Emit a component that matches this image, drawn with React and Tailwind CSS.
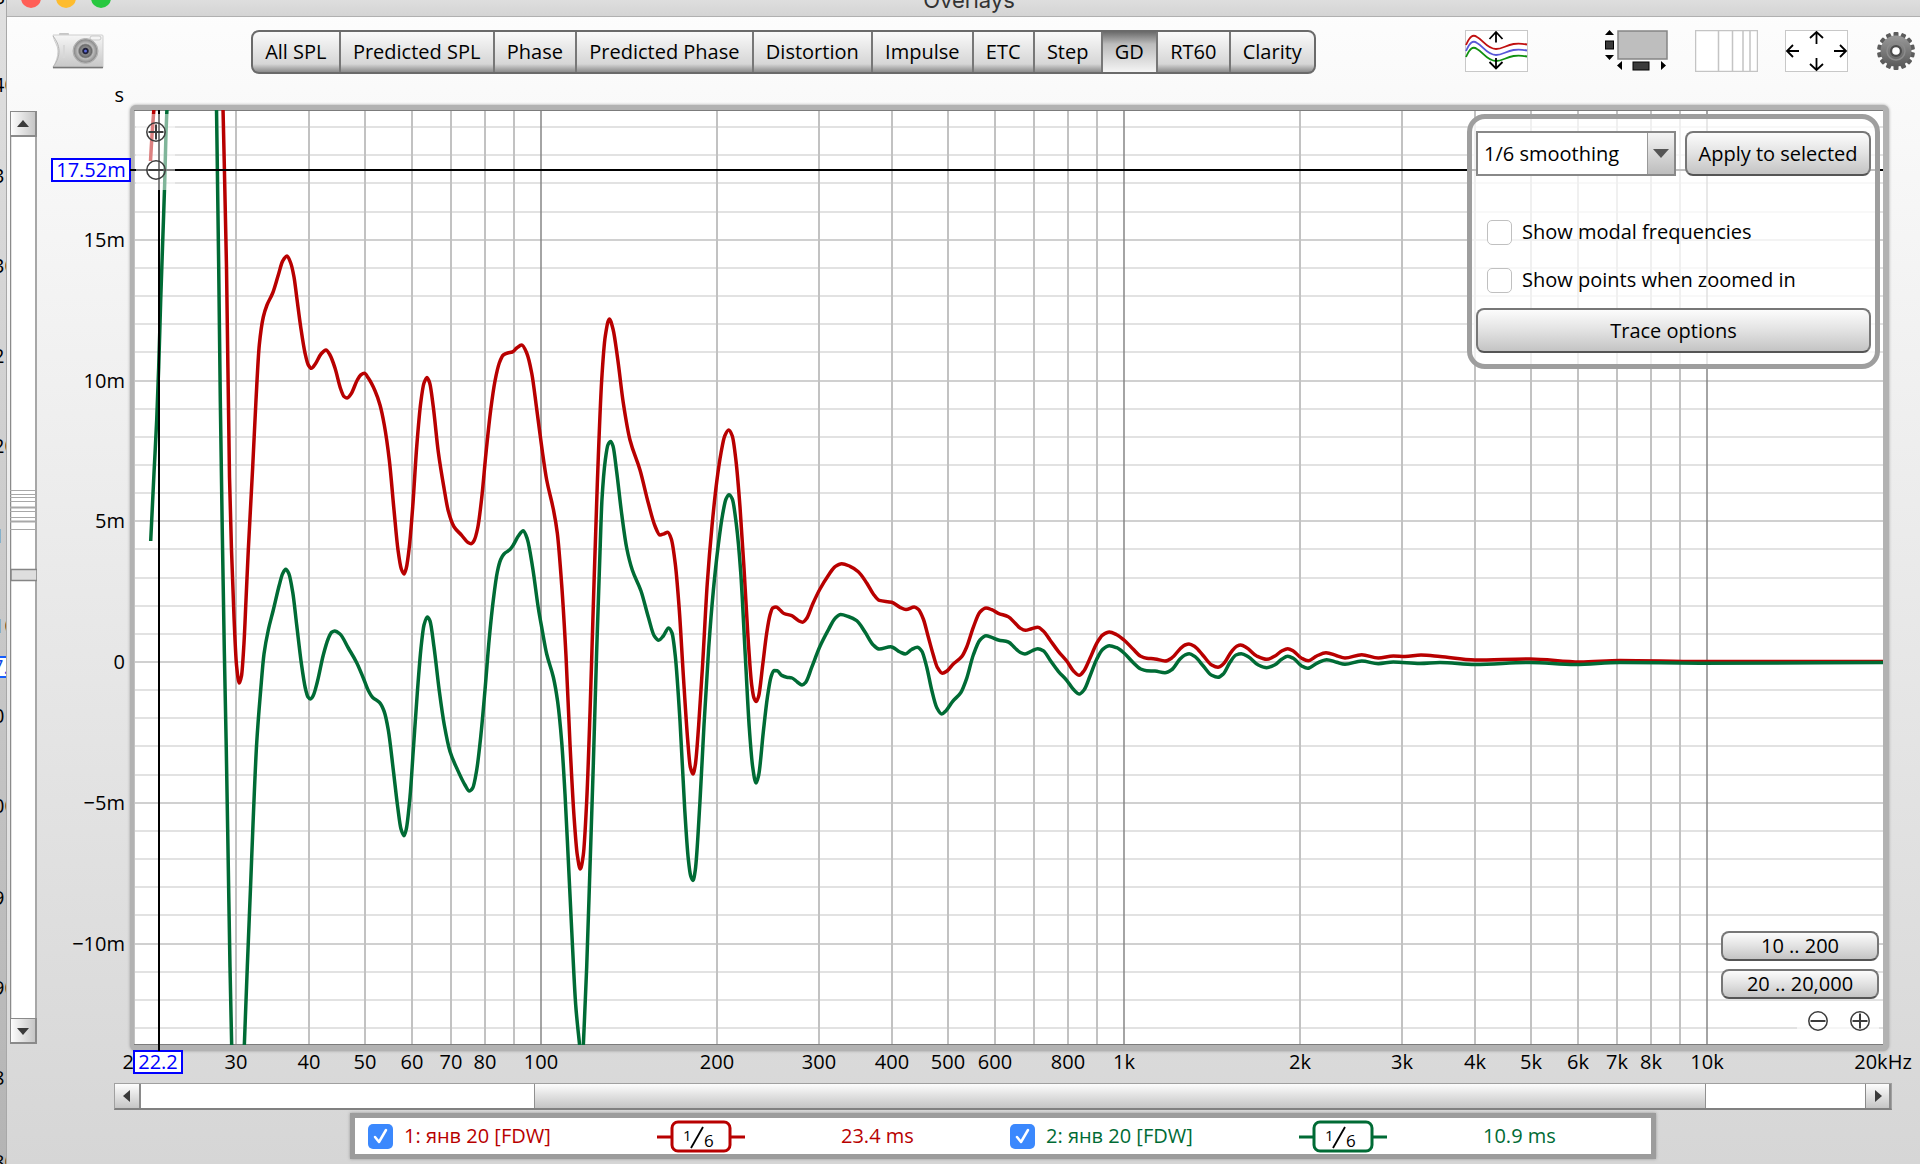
import { useState } from 'react';

const TABS = [
  'All SPL', 'Predicted SPL', 'Phase', 'Predicted Phase', 'Distortion', 'Impulse',
  'ETC', 'Step', 'GD', 'RT60', 'Clarity',
];

// Canvas of the plot in its own units
const BOX = { x: 134, y: 110, w: 1749, h: 935 };
const freqX = (f) => Math.round(541 + 583 * Math.log10(f / 100));
const delayY = (ms) => Math.round(662 - 28.15 * ms);
const left = (x) => `${((x - BOX.x) / BOX.w) * 100}%`;
const top = (y) => `${((y - BOX.y) / BOX.h) * 100}%`;

const FREQS = [10, 100, 1000].flatMap((d) => [2, 3, 4, 5, 6, 7, 8, 9, 10].map((n) => n * d));
const DELAYS = Array.from({ length: 33 }, (_, i) => i - 13);

const X_LABELS = [
  [20, '20'], [30, '30'], [40, '40'], [50, '50'], [60, '60'], [70, '70'], [80, '80'],
  [100, '100'], [200, '200'], [300, '300'], [400, '400'], [500, '500'], [600, '600'],
  [800, '800'], [1000, '1k'], [2000, '2k'], [3000, '3k'], [4000, '4k'], [5000, '5k'],
  [6000, '6k'], [7000, '7k'], [8000, '8k'], [10000, '10k'], [20000, '20kHz'],
];
const Y_LABELS = [[15, '15m'], [10, '10m'], [5, '5m'], [0, '0'], [-5, '−5m'], [-10, '−10m']];

const RED = [
  [[150.5, 161], [152, 135], [154, 108]],
  [
    [223, 108], [226.5, 267], [229.5, 477], [231.5, 550], [234, 617], [236.5, 665], [239.3, 683], [241.5, 676],
    [244, 643], [246, 600], [248.3, 550], [252.7, 467], [256, 400], [259.3, 345], [263.3, 317], [267, 305],
    [272.7, 293], [278.3, 275], [282.7, 261], [287, 256], [290.7, 263], [294, 277], [296.7, 297], [300.7, 327],
    [305, 353], [308.3, 365], [311.3, 368.3], [315.3, 364], [321, 354], [326, 350], [330, 355], [335, 368],
    [340.7, 389], [344, 396.5], [347, 398], [351, 394], [357.3, 380], [360.7, 375], [364.3, 373.3], [368.3, 378],
    [375, 390.7], [380, 405], [384.3, 425], [389.3, 460], [394, 510], [398, 550], [401.3, 569], [404, 574],
    [406.3, 568], [409.3, 547], [412.7, 507], [416.7, 447], [420.7, 403], [424, 383], [427, 377.5], [429.7, 383],
    [433.3, 407], [438.3, 452], [444, 488], [448.3, 511], [454, 526.7], [461.7, 535.3], [468, 542.5], [471, 543.7],
    [474, 540.7], [477.7, 528], [481.7, 498], [486, 453], [490.7, 410], [495, 381], [499.3, 363], [503.3, 355],
    [507.7, 353], [512.3, 352], [516.7, 348], [521.7, 345], [526.7, 353], [531.7, 373], [536.7, 409], [542, 449],
    [546.7, 480], [553.3, 509], [557.3, 533], [561.7, 585], [566, 656], [570, 744], [574, 816], [577.3, 855],
    [580.3, 869], [583.3, 855], [586.7, 801], [590, 713], [593.3, 606], [597.3, 484], [601.7, 380], [605.3, 336],
    [609.3, 319], [613, 329], [617.7, 359], [623.3, 403], [630, 440], [640, 470], [648.3, 503], [655, 526],
    [660, 535], [664, 533.8], [667.7, 532.3], [671.3, 539], [675.3, 564], [679.3, 610], [683.3, 675], [687.7, 740],
    [690.3, 767], [693, 774], [695.3, 765], [698.7, 725], [702.7, 663], [707.3, 583], [712, 526], [716.7, 482],
    [721, 453], [724.7, 436], [728.7, 430], [732.3, 436], [736, 461], [740, 507], [744, 568], [748, 637],
    [751.7, 685], [754, 698], [756.3, 701.5], [758.7, 696], [762.7, 665], [766.7, 633], [770, 615], [772.7, 608],
    [776, 606.9], [780, 610], [784, 613.5], [791.7, 615.7], [798.3, 620.5], [802.7, 622.2], [806.7, 618.4],
    [812.7, 604], [820, 589], [828.3, 575.5], [835, 566.7], [841.7, 563.7], [850, 566.3], [858.3, 571.7],
    [866.7, 583], [873.3, 594], [879.3, 600.4], [891.7, 602.3], [900, 607.3], [906, 609.6], [914.3, 607],
    [918.3, 609.3], [923.3, 619], [928.3, 637], [933.3, 655], [937.3, 667.3], [942.3, 673.3], [947.3, 670.7],
    [953.3, 664], [961.7, 656.7], [966.7, 647], [973.3, 627.3], [980, 612], [986, 608], [991.7, 609.7],
    [998.3, 613.3], [1008.3, 616.7], [1015, 623], [1020, 628], [1025.3, 630.3], [1031.7, 628.7], [1037.7, 627.3],
    [1043.3, 631], [1050, 640], [1058.3, 651.3], [1066.7, 661], [1073.3, 670.7], [1079.3, 675.3], [1084, 670.7],
    [1090, 658.3], [1096.7, 643.3], [1102.7, 635], [1109.3, 632], [1116.7, 634.7], [1124, 640], [1133.3, 649.3],
    [1140.7, 656.3], [1146.7, 658.3], [1155, 658.9], [1165, 661], [1171.7, 658], [1180, 649], [1185, 645],
    [1189, 644], [1195, 646.7], [1203.3, 655.7], [1211.7, 665], [1218, 667.3], [1223.3, 664], [1231.7, 651.3],
    [1236.7, 646.3], [1240.7, 645], [1246.7, 647.7], [1256.7, 656], [1266.7, 659.3], [1275, 656], [1281.7, 651],
    [1287.7, 648.7], [1293.3, 651], [1301.7, 658.3], [1308.3, 660.7], [1316.7, 656], [1326, 652.7], [1336.7, 655.7],
    [1345, 658], [1361.7, 654.7], [1378.3, 658], [1393.3, 656], [1405, 656.5], [1421, 655], [1440, 656.5],
    [1475, 660], [1530, 659], [1580, 662], [1620, 660.5], [1700, 661.5], [1883, 661.5],
  ],
];

const GREEN = [
  [
    [150.7, 541], [154, 473], [156.7, 420], [158.7, 367], [160.7, 300], [163, 233], [164.7, 183], [166, 133], [167, 108],
  ],
  [
    [216.5, 108], [218.7, 267], [220.3, 400], [222.3, 533], [224.3, 650], [226.3, 750], [228.3, 867], [230, 967],
    [231.7, 1046],
  ],
  [
    [244.3, 1046], [247.3, 967], [250.7, 883], [253.3, 817], [256.7, 743], [260.7, 690], [264, 654], [268.3, 630],
    [273.3, 610], [279.3, 585], [282.7, 573.5], [285.7, 569.3], [288.7, 573.3], [292.7, 592], [296.7, 625],
    [301.3, 663], [305.3, 688], [308, 697], [310.3, 699], [313, 696], [317.3, 682], [323.3, 655], [328.3, 638.5],
    [331.7, 632.3], [334.7, 631], [340, 634], [348.3, 648], [356.7, 662.7], [363.3, 678], [368.3, 690.5],
    [372.7, 697.5], [379.3, 702.3], [384, 711], [388.3, 730], [393.3, 770], [397.7, 807], [401, 829], [404, 835.7],
    [406.3, 829], [410, 797], [413.3, 750], [417.3, 693], [421, 648], [424, 625], [427.3, 617], [430, 621],
    [434, 647], [439.3, 691], [444.3, 725], [450, 751.5], [456.7, 768], [465, 785], [469.3, 791], [472.7, 788],
    [476.7, 770], [480.7, 737], [485, 690], [489.3, 638], [493.3, 600], [497.3, 572], [500.7, 559.5], [504, 554],
    [510, 549.5], [513.3, 545], [518.3, 536], [523.3, 530.7], [527.3, 539], [532.7, 568], [538.3, 608], [542, 629],
    [546.7, 654], [553.3, 677], [557.7, 702], [561.7, 742], [565, 794], [568.3, 860], [571.7, 930], [575.7, 1005],
    [579.7, 1046],
  ],
  [
    [583.3, 1046], [586.7, 967], [590, 867], [593.3, 765], [596.7, 650], [600, 552], [602, 499], [605.3, 460],
    [608, 444.7], [610.7, 441.5], [613, 446], [616.7, 472], [621.7, 514], [626.7, 548], [632.3, 570], [641, 591],
    [648.3, 617], [654.3, 636], [658.7, 640.2], [663.3, 636], [668.7, 628], [672, 633], [675.3, 656], [680, 721],
    [684.7, 809], [688.3, 859], [690.7, 876], [693, 880.5], [695.3, 870], [700, 801], [704, 725], [708.7, 648],
    [713.3, 591], [718.3, 545], [722.7, 514], [726, 499], [729, 494.8], [732.3, 499], [736.3, 524], [740.7, 572],
    [745.3, 656], [749.3, 728], [752.7, 767], [756, 783], [758.7, 775], [763.3, 732], [767.3, 698], [771, 677],
    [774, 670.5], [777.3, 670.8], [781.7, 675.4], [786.7, 677.3], [791.7, 677.9], [797.3, 682], [802, 685],
    [805.7, 682.3], [811.7, 667.4], [820, 646.3], [828.3, 630], [835, 618.4], [840.7, 614.6], [848.3, 616.5],
    [856.7, 620.7], [865, 632], [873.3, 645], [879.3, 649], [890.7, 646.7], [900, 652], [905.3, 654], [911.7, 649.5],
    [917.3, 647.3], [921.7, 651], [926.7, 667], [931.7, 690], [936.7, 707.5], [941.7, 714], [946, 710.7],
    [952.7, 701.3], [960.7, 692.7], [966.7, 678.3], [973.3, 655], [980, 640], [986, 635.7], [991.7, 637.3],
    [998.3, 640], [1008.3, 642], [1015, 648], [1020, 652.3], [1025, 654], [1031.7, 651], [1037.7, 648.7],
    [1043.3, 650.7], [1050, 660], [1058.3, 671.3], [1066.7, 680.3], [1073.3, 689.3], [1079.3, 694], [1084, 690],
    [1090, 676], [1096.7, 659.3], [1102.7, 649.3], [1109.3, 645.7], [1116.7, 647.7], [1124, 653], [1133.3, 662.7],
    [1140.7, 669], [1146.7, 670.7], [1155, 671.1], [1165, 672.7], [1171.7, 669.7], [1180, 659], [1185, 655],
    [1189.3, 653.7], [1195, 656.7], [1203.3, 666], [1211.7, 675.3], [1218, 677.3], [1223.3, 674], [1230, 662.3],
    [1236, 655], [1241.3, 653.7], [1248.3, 656.7], [1258.3, 665], [1266.7, 667.7], [1275, 664.7], [1281.7, 659.3],
    [1287.7, 656.3], [1293.3, 658.3], [1301.7, 666], [1307.7, 668.3], [1316.7, 663.3], [1326.7, 659.7],
    [1336.7, 662.3], [1345, 664.3], [1361.7, 661], [1378.3, 663.7], [1393.3, 662], [1420, 663.5], [1440, 662.5],
    [1475, 664.5], [1530, 662.5], [1575, 664.5], [1620, 662.5], [1700, 663.2], [1883, 662.5],
  ],
];

// Monotone cubic through the points, so peaks don't overshoot
function curve(pts) {
  const n = pts.length;
  const d = [];
  for (let i = 0; i < n - 1; i++) d.push((pts[i + 1][1] - pts[i][1]) / (pts[i + 1][0] - pts[i][0]));
  const m = pts.map((_, i) => {
    if (i === 0) return d[0];
    if (i === n - 1) return d[n - 2];
    if (d[i - 1] * d[i] <= 0) return 0;
    return (2 * d[i - 1] * d[i]) / (d[i - 1] + d[i]);
  });
  let out = `M${pts[0][0]} ${pts[0][1]}`;
  for (let i = 0; i < n - 1; i++) {
    const [x0, y0] = pts[i];
    const [x1, y1] = pts[i + 1];
    const h = (x1 - x0) / 3;
    out += `C${x0 + h} ${y0 + m[i] * h} ${x1 - h} ${y1 - m[i + 1] * h} ${x1} ${y1}`;
  }
  return out;
}

const BUTTON =
  'border-2 border-[#777] border-b-[#555] rounded-lg bg-linear-to-b from-[#fcfcfc] via-[#e2e2e2] to-[#c4c4c4]';

function Trace({ segments, color }) {
  return segments.map((pts, i) => (
    <path key={i} d={curve(pts)} fill="none" stroke={color} strokeWidth="3.5" strokeLinejoin="round" />
  ));
}

function ZoomButton({ label, plus }) {
  return (
    <button aria-label={label} className="block size-5">
      <svg viewBox="0 0 20 20" className="size-5" fill="none" stroke="#3c3c3c">
        <circle cx="10" cy="10" r="9.2" strokeWidth="1.5" />
        <path d={plus ? 'M2.500 10h15M10 2.500v15' : 'M2.500 10h15'} strokeWidth="2" />
      </svg>
    </button>
  );
}

function Camera() {
  return (
    <svg viewBox="0 0 52 36" className="w-[52px] h-9">
      <defs>
        <linearGradient id="cam" x1="0" y1="0" x2="0" y2="1">
          <stop offset="0" stopColor="#f6f6f6" />
          <stop offset="1" stopColor="#c6c6c6" />
        </linearGradient>
        <radialGradient id="lens">
          <stop offset="0" stopColor="#0a0a1c" />
          <stop offset="0.22" stopColor="#23233c" />
          <stop offset="0.3" stopColor="#8c8c8c" />
          <stop offset="0.5" stopColor="#6b6b6b" />
          <stop offset="0.62" stopColor="#bdbdbd" />
          <stop offset="0.9" stopColor="#8e8e8e" />
          <stop offset="1" stopColor="#c8c8c8" />
        </radialGradient>
      </defs>
      <rect x="7" y="0" width="10" height="4" rx="1" fill="#c6c6c6" />
      <path d="M1 2H50a1 1 0 0 1 1 1V34a1 1 0 0 1-1 1H1C4 29 6 24 6 18C6 12 2 9 1 2Z" fill="url(#cam)" stroke="#cfcfcf" />
      <path d="M1 3C8 12 10 22 1 34" fill="none" stroke="#b4b4b4" />
      <path d="M1 34.5H51" stroke="#777" strokeWidth="1.5" />
      <rect x="38" y="3" width="11" height="4" rx="2" fill="#f4f4f4" stroke="#c9c9c9" />
      <path d="M12 12v13" stroke="#d8d8d8" strokeWidth="2" />
      <circle cx="33.5" cy="18" r="12.5" fill="url(#lens)" stroke="#b0b0b0" />
      <circle cx="33.5" cy="18" r="1.5" fill="#5b68d8" />
    </svg>
  );
}

function CurvesIcon() {
  const wave = 'C5 6 8 4 12 7C18 10 22 19 31 19C40 19 44 11 62 14.500';
  return (
    <svg viewBox="0 0 63 42" className="w-[63px] h-[42px]" fill="none">
      <rect x="0.5" y="0.5" width="62" height="41" fill="#fff" stroke="#c8c8c8" />
      <path d={`M1 15${wave}`} stroke="#c01010" strokeWidth="1.8" />
      <path d={`M1 15${wave}`} stroke="#5858d8" strokeWidth="1.8" transform="translate(0 6)" />
      <path d={`M1 15${wave}`} stroke="#109010" strokeWidth="1.8" transform="translate(0 12)" />
      <path d="M31 12.500V2M24.500 9L31 2L37.500 9M31 28V38.500M24.500 32L31 38.500L37.500 32" stroke="#000" strokeWidth="1.8" />
    </svg>
  );
}

function ScrollbarsIcon() {
  return (
    <svg viewBox="0 0 63 42" className="w-[63px] h-[42px]">
      <rect x="13" y="1" width="49" height="28" fill="#bebebe" stroke="#858585" strokeWidth="1.5" />
      <path d="M0 5L4.500 0L9 5ZM0 25L4.500 30L9 25ZM17 31V40L12 35.500ZM56 31V40L61 35.500Z" fill="#000" />
      <rect x="0.500" y="11" width="8" height="8" fill="#3a3a3a" stroke="#000" />
      <rect x="28" y="32" width="16" height="8" fill="#3a3a3a" stroke="#000" />
    </svg>
  );
}

function GridIcon() {
  return (
    <svg viewBox="0 0 63 42" className="w-[63px] h-[42px]" fill="none" stroke="#c4c4c4">
      <rect x="0.5" y="0.5" width="62" height="41" fill="#fff" strokeWidth="1.500" />
      <path d="M23.500 0V42M37.500 0V42M48 0V42M55 0V42" strokeWidth="1.500" />
    </svg>
  );
}

function ArrowsIcon() {
  return (
    <svg viewBox="0 0 63 42" className="w-[63px] h-[42px]" fill="none">
      <rect x="0.5" y="0.5" width="62" height="41" fill="#fff" stroke="#c8c8c8" />
      <path
        d="M31.500 14V2M25 8L31.500 2L38 8M31.500 28V40M25 34L31.500 40L38 34M14 21H2M8 15L2 21L8 27M49 21H61M55 15L61 21L55 27"
        stroke="#000"
        strokeWidth="1.8"
      />
    </svg>
  );
}

function GearIcon() {
  return (
    <svg viewBox="-20 -20 40 40" className="size-10">
      <defs>
        <linearGradient id="gear" x1="0" y1="0" x2="0" y2="1">
          <stop offset="0" stopColor="#9a9a9a" />
          <stop offset="1" stopColor="#5a5a5a" />
        </linearGradient>
      </defs>
      {Array.from({ length: 14 }, (_, i) => (
        <rect key={i} x="-2.500" y="-19" width="5" height="8" rx="1" fill="#5c5c5c" transform={`rotate(${(i * 360) / 14})`} />
      ))}
      <circle r="15.500" fill="url(#gear)" />
      <circle r="9" fill="none" stroke="#8b8b8b" strokeWidth="1.5" />
      <circle r="6" fill="#4c4c4c" />
      <circle r="3.800" fill="#fff" />
    </svg>
  );
}

function Arrow({ d }) {
  return (
    <svg viewBox="0 0 12 12" className="size-3" fill="#3a3a3a">
      <path d={d} />
    </svg>
  );
}

function SmoothingBadge({ color }) {
  return (
    <svg viewBox="0 -1 88 34" className="w-[88px] h-[34px]" fill="none">
      <path d="M0 17H15M73 17H88" stroke={color} strokeWidth="3" />
      <rect x="15" y="2" width="58" height="29" rx="6" fill="#fff" stroke={color} strokeWidth="3" />
      <path d="M34 28L46 7" stroke="#000" strokeWidth="1.800" />
      <text x="26" y="21" fontSize="15" fill="#000">1</text>
      <text x="47" y="27" fontSize="17" fill="#000">6</text>
    </svg>
  );
}

function LegendItem({ id, name, value, color, tone }) {
  return (
    <div className={`grid w-[642px] shrink-0 grid-cols-[25px_264px_88px_1fr] items-center ${tone}`}>
      <input id={id} type="checkbox" defaultChecked className="peer col-start-1 row-start-1 size-[25px] appearance-none rounded-[5px] bg-[#3b88fd]" />
      <svg viewBox="0 0 25 25" className="pointer-events-none col-start-1 row-start-1 size-[25px]" fill="none">
        <path d="M7 13L11 18L18 6" stroke="#fff" strokeWidth="2.500" strokeLinecap="round" strokeLinejoin="round" />
      </svg>
      <label htmlFor={id} className="pl-[11px]">{name}</label>
      <SmoothingBadge color={color} />
      <span className="pl-24">{value}</span>
    </div>
  );
}

// Axis of the window behind, peeking out on the left edge
const BEHIND = [
  ['P', 'top-[-10px]'], ['40', 'top-[72px]'], ['3', 'top-[163px]'], ['30', 'top-[253px]'], ['2', 'top-[343px]'],
  ['20', 'top-[433px]'], ['1', 'top-[523px]'], ['10', 'top-[613px]'], ['0', 'top-[703px]'], ['00', 'top-[793px]'],
  ['9', 'top-[885px]'], ['90', 'top-[975px]'], ['8', 'top-[1065px]'], ['80', 'top-[1149px]'],
];

function WindowBehind() {
  return (
    <div className="relative w-[6px] shrink-0 overflow-hidden bg-linear-to-b from-[#e0e0e0] to-[#b4b4b4]">
      {BEHIND.map(([t, pos], i) => (
        <span key={i} className={`absolute -left-[7px] leading-[26px] ${pos}`}>{t}</span>
      ))}
      <span className="absolute -left-[14px] top-[656px] w-8 border-2 border-blue-600 bg-white pl-1 leading-[18px] text-blue-700">7.</span>
    </div>
  );
}

function VerticalScroll() {
  const button = 'flex h-[26px] shrink-0 items-center justify-center border border-r-2 border-b-2 border-[#8a8a8a] bg-linear-to-r from-[#fdfdfd] to-[#c6c6c6]';
  return (
    <div className="mt-[6px] mb-[7px] ml-[3px] flex w-[27px] flex-col">
      <button aria-label="Scroll up" className={button}><Arrow d="M0 9L6 2L12 9Z" /></button>
      <svg viewBox="0 0 27 880" preserveAspectRatio="none" className="min-h-0 w-full flex-1">
        <rect width="27" height="880" fill="#fff" />
        <path d="M0.500 0V880M26 0V880" stroke="#8a8a8a" strokeWidth="1.500" />
        <path d="M0 353H27M0 357H27M0 360H27M0 364H27M0 374H27M0 380H27M0 392H27" stroke="#a8a8a8" />
        <path d="M0 370H27M0 384H27" stroke="#a8a8a8" strokeWidth="2" />
        <rect x="1" y="432" width="26" height="11" fill="#dedede" stroke="#858585" strokeWidth="1.500" />
      </svg>
      <button aria-label="Scroll down" className={button}><Arrow d="M0 3L6 10L12 3Z" /></button>
    </div>
  );
}

function HorizontalScroll() {
  const button = 'flex w-[26px] items-center justify-center border-r-2 border-[#8a8a8a] bg-linear-to-b from-[#fdfdfd] to-[#c6c6c6]';
  return (
    <div className="mt-2 mr-7 ml-[107px] flex h-[27px] shrink-0 border border-[#a0a0a0] border-b-2 border-b-[#808080] bg-white">
      <button aria-label="Scroll left" className={button}><Arrow d="M9 0L2 6L9 12Z" /></button>
      <div className="flex flex-1">
        <div className="w-[22.8%]" />
        <div className="w-[68%] border-x border-[#909090] bg-linear-to-b from-[#fdfdfd] to-[#c4c4c4]" />
      </div>
      <button aria-label="Scroll right" className={`${button} border-l`}><Arrow d="M3 0L10 6L3 12Z" /></button>
    </div>
  );
}

function GraphSettings() {
  return (
    <div className="absolute top-1 right-[3px] w-[413px] rounded-[18px] border-[5px] border-[#9e9e9e] bg-white/75 px-1 pt-3 pb-[11px]">
      <div className="flex h-[45px] gap-[9px]">
        <div className="relative w-[200px] shrink-0">
          <select aria-label="Smoothing" className="h-full w-full appearance-none border-2 border-[#888] bg-white pl-1.5">
            <option>1/6 smoothing</option>
          </select>
          <span className="pointer-events-none absolute inset-y-0.5 right-0.5 flex w-[27px] items-center justify-center border-l border-[#999] bg-linear-to-b from-[#f4f4f4] to-[#bdbdbd]">
            <svg viewBox="0 0 16 9" className="w-4" fill="#555"><path d="M0 0H16L8 9Z" /></svg>
          </span>
        </div>
        <button className={`flex-1 ${BUTTON}`}>Apply to selected</button>
      </div>
      <div className="mt-8 mb-1">
        {['Show modal frequencies', 'Show points when zoomed in'].map((text) => (
          <label key={text} className="flex h-12 items-center gap-2.5 pl-[11px]">
            <input type="checkbox" className="size-[25px] appearance-none rounded-[5px] border border-[#c0c0c0] bg-white checked:bg-[#3b88fd]" />
            {text}
          </label>
        ))}
      </div>
      <button className={`h-[45px] w-full ${BUTTON}`}>Trace options</button>
    </div>
  );
}

function Plot() {
  return (
    <div className="flex-1 rounded-md bg-[#b2b2b2] pt-[5px] pr-[6px] pb-[6px] pl-1 shadow-[0_0_3px_#999]">
      <div className="relative h-full bg-white">
        <svg viewBox={`${BOX.x} ${BOX.y} ${BOX.w} ${BOX.h}`} preserveAspectRatio="none" className="block h-full w-full">
          {DELAYS.map((v) => (
            <path key={v} d={`M134 ${delayY(v)}H1883`} stroke={v % 5 ? '#e2e2e2' : '#c0c0c0'} strokeWidth={v % 5 ? 2 : 1.5} />
          ))}
          {FREQS.map((f) => (
            <path key={f} d={`M${freqX(f)} 110V1045`} stroke={Math.log10(f) % 1 ? '#c2c2c2' : '#868686'} strokeWidth={Math.log10(f) % 1 ? 2 : 1.5} />
          ))}
          <path d="M134 110.500H1883M134 1044.500H1883" stroke="#7c7c7c" />
          <Trace segments={RED} color="#b80000" />
          <Trace segments={GREEN} color="#006b35" />
          <path d="M134 170H1883M159 110V1045" stroke="#000" strokeWidth="2" />
        </svg>

        <div className="absolute top-1 left-0.5 flex h-[76px] w-[39px] flex-col items-center gap-[18px] bg-white/50 pt-2">
          <ZoomButton label="Zoom in vertically" plus />
          <ZoomButton label="Zoom out vertically" />
        </div>

        <GraphSettings />

        <div className="absolute right-1 bottom-[10px] flex w-[158px] flex-col gap-2">
          <button className={`h-[30px] leading-none ${BUTTON}`}>10 .. 200</button>
          <button className={`h-[30px] leading-none ${BUTTON}`}>20 .. 20,000</button>
          <div className="ml-auto flex h-7 w-[82px] items-center gap-[22px] bg-white/70 pl-[11px]">
            <ZoomButton label="Zoom out horizontally" />
            <ZoomButton label="Zoom in horizontally" plus />
          </div>
        </div>

        {/* axis labels hang outside the plot */}
        {Y_LABELS.map(([v, text]) => (
          <span key={text} className="absolute right-full mr-[9px] -translate-y-1/2 leading-6" style={{ top: top(delayY(v)) }}>
            {text}
          </span>
        ))}
        {X_LABELS.map(([f, text]) => (
          <span key={text} className="absolute top-full mt-[5px] -translate-x-1/2 leading-6" style={{ left: left(freqX(f)) }}>
            {text}
          </span>
        ))}
        <span className="absolute right-full bottom-full mr-[10px] mb-[3px] leading-6">s</span>
        <span
          className="absolute right-full mr-[3px] w-20 -translate-y-1/2 border-2 border-[#0000ff] bg-white text-center leading-5 text-[#0000ff]"
          style={{ top: top(170) }}
        >
          17.52m
        </span>
        <span
          className="absolute top-full mt-[5px] w-[50px] -translate-x-1/2 border-2 border-[#0000ff] bg-white text-center leading-5 text-[#0000ff]"
          style={{ left: left(158) }}
        >
          22.2
        </span>
        <span className="absolute top-full h-[6px] w-0.5 bg-black" style={{ left: left(158) }} />
        <span className="absolute right-full h-0.5 w-1 bg-black" style={{ top: top(169) }} />
      </div>
    </div>
  );
}

export default function App() {
  const [tab, setTab] = useState('GD');

  return (
    <div className="flex h-screen overflow-hidden font-['Open_Sans','Noto_Sans',sans-serif] text-[20px] text-black">
      <WindowBehind />
      <div className="flex min-w-0 flex-1 flex-col border-l border-[#a8a8a8] bg-linear-to-b from-[#fdfdfd] to-[#d6d6d6]">
        <header className="relative flex h-[17px] shrink-0 items-end border-b border-[#b0b0b0] bg-linear-to-b from-[#dedede] to-[#d4d4d4] pl-[14px]">
          <div className="flex gap-[15px] pb-2">
            <span className="size-5 rounded-full bg-[#ff5f57]" />
            <span className="size-5 rounded-full bg-[#febc2e]" />
            <span className="size-5 rounded-full bg-[#28c840]" />
          </div>
          <h1 className="flex-1 pr-[93px] pb-[4px] text-center font-['Inter',sans-serif] text-[22px] leading-6 text-[#333]">Overlays</h1>
        </header>

        <div className="flex h-[88px] shrink-0 items-start pt-[13px] pr-1 pl-[45px]">
          <button aria-label="Capture graph image" className="mt-[3px]"><Camera /></button>
          <nav className="ml-[147px] flex h-11 w-[1065px] overflow-hidden rounded-lg border-2 border-[#6a6a6a] bg-[#6a6a6a]">
            {TABS.map((name, i) => (
              <button
                key={name}
                onClick={() => setTab(name)}
                className={`grow px-[11px] ${i ? 'border-l-2 border-[#777]' : ''} ${
                  tab === name
                    ? 'bg-linear-to-b from-[#6c6c6c] via-[#bcbcbc] via-30% to-[#f4f4f4]'
                    : 'bg-linear-to-b from-[#fafafa] via-[#d6d6d6] via-80% to-[#8c8c8c]'
                }`}
              >
                {name}
              </button>
            ))}
          </nav>
          <div className="ml-auto flex items-center">
            <button aria-label="Separate traces" className="mr-[77px]"><CurvesIcon /></button>
            <button aria-label="Scrollbars" className="mr-[27px]"><ScrollbarsIcon /></button>
            <button aria-label="Frequency axis" className="mr-[27px]"><GridIcon /></button>
            <button aria-label="Graph limits" className="mr-[28px]"><ArrowsIcon /></button>
            <button aria-label="Graph controls"><GearIcon /></button>
          </div>
        </div>

        <main className="flex min-h-0 flex-1 pr-[31px]">
          <VerticalScroll />
          <div className="w-[93px] shrink-0" />
          <Plot />
        </main>

        <div className="h-6 shrink-0" />
        <HorizontalScroll />

        <footer className="flex shrink-0 justify-center pt-[3px] pb-[5px] pl-[79px]">
          <div className="flex h-[46px] w-full max-w-[1306px] items-center border-[5px] border-[#9c9c9c] bg-white pl-[13px] shadow-[0_0_3px_#999]">
            <LegendItem id="m1" name="1: янв 20 [FDW]" value="23.4 ms" color="#b80000" tone="text-[#b80000]" />
            <LegendItem id="m2" name="2: янв 20 [FDW]" value="10.9 ms" color="#006b35" tone="text-[#006b35]" />
          </div>
        </footer>
      </div>
    </div>
  );
}
